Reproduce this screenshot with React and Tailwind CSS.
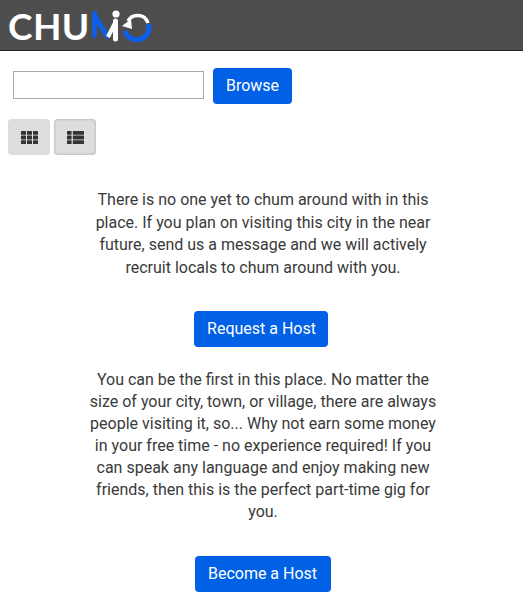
import React from "react";

function Logo() {
  return (
    <div className="flex items-center h-[50px] pl-[8px]">
      <span className="block w-[77px] text-white text-[37px] font-bold leading-none tracking-[0.4px] font-['Lato',sans-serif]">CHU</span>
      <svg width="75" height="42" viewBox="85 5 75 42" fill="none" className="mt-[2px]">
        <path d="M94.5 36 L94.5 15" stroke="#0b5fe8" strokeWidth="4.6" strokeLinecap="round" />
        <circle cx="94.5" cy="13.5" r="2.6" fill="#0b5fe8" />
        <path d="M94.5 15 L107 36" stroke="#0b5fe8" strokeWidth="5" strokeLinecap="round" />
        <path d="M108 37 L115 23" stroke="#ffffff" strokeWidth="4" />
        <path d="M115.5 21 L115.5 39" stroke="#ffffff" strokeWidth="5" strokeLinecap="round" />
        <circle cx="116" cy="14" r="3.6" fill="#ffffff" />
        <path d="M128 21 A11 11 0 0 1 148 23" stroke="#ffffff" strokeWidth="3.6" />
        <path d="M148.5 24 A11.5 11.5 0 0 1 125 31" stroke="#0b5fe8" strokeWidth="5" />
        <path d="M122 26 L131 19 L132 29 Z" fill="#ffffff" />
      </svg>
    </div>
  );
}

function GridIcon() {
  return (
    <svg width="17" height="13" viewBox="0 0 17 13" fill="#333333">
      {[0, 4.6, 9.2].map((y) =>
        [0, 6, 12].map((x) => <rect key={`${x}-${y}`} x={x} y={y} width="5" height="3.8" rx="0.5" />)
      )}
    </svg>
  );
}

function ListIcon() {
  return (
    <svg width="17" height="13" viewBox="0 0 17 13" fill="#333333">
      {[0, 4.6, 9.2].map((y) => (
        <g key={y}>
          <rect x="0" y={y} width="4.6" height="3.8" rx="0.5" />
          <rect x="5.8" y={y} width="11.2" height="3.8" rx="0.5" />
        </g>
      ))}
    </svg>
  );
}

export default function App() {
  return (
    <div className="w-[523px] h-[614px] overflow-hidden bg-white font-['Roboto',sans-serif] text-[#3a3a3a] text-base">
      <header className="h-[51px] bg-[#4d4d4d] border-b border-[#222222]">
        <Logo />
      </header>

      <div className="flex items-start pl-[13px] pt-[17px] gap-[9px]">
        <input className="w-[191px] h-[28px] mt-[3px] border border-[#a9a9a9] bg-white outline-none" />
        <button className="h-[36px] w-[79px] rounded bg-[#0060e6] text-white">Browse</button>
      </div>

      <div className="flex gap-1 pl-2 pt-[15px]">
        <button className="w-[42px] h-[36px] rounded bg-[#dddddd] flex items-center justify-center">
          <GridIcon />
        </button>
        <button className="w-[42px] h-[36px] rounded bg-[#dddddd] shadow-[inset_0_0_3px_rgba(0,0,0,0.25)] flex items-center justify-center">
          <ListIcon />
        </button>
      </div>

      <div className="flex flex-col items-center">
        <p className="w-[350px] ml-[3px] text-center leading-[22.5px] mt-[34px]">
          There is no one yet to chum around with in this place. If you plan on visiting this city in the near future, send us a message and we will actively recruit locals to chum around with you.
        </p>
        <button className="mt-[32px] -ml-[2px] pl-[2px] h-[36px] w-[134px] rounded bg-[#0060e6] text-white">Request a Host</button>
        <p className="w-[350px] ml-[3px] text-center leading-[22px] mt-[22px]">
          You can be the first in this place. No matter the size of your city, town, or village, there are always people visiting it, so... Why not earn some money in your free time - no experience required! If you can speak any language and enjoy making new friends, then this is the perfect part-time gig for you.
        </p>
        <button className="mt-[33px] ml-[2px] h-[36px] w-[136px] rounded bg-[#0060e6] text-white">Become a Host</button>
      </div>
    </div>
  );
}
